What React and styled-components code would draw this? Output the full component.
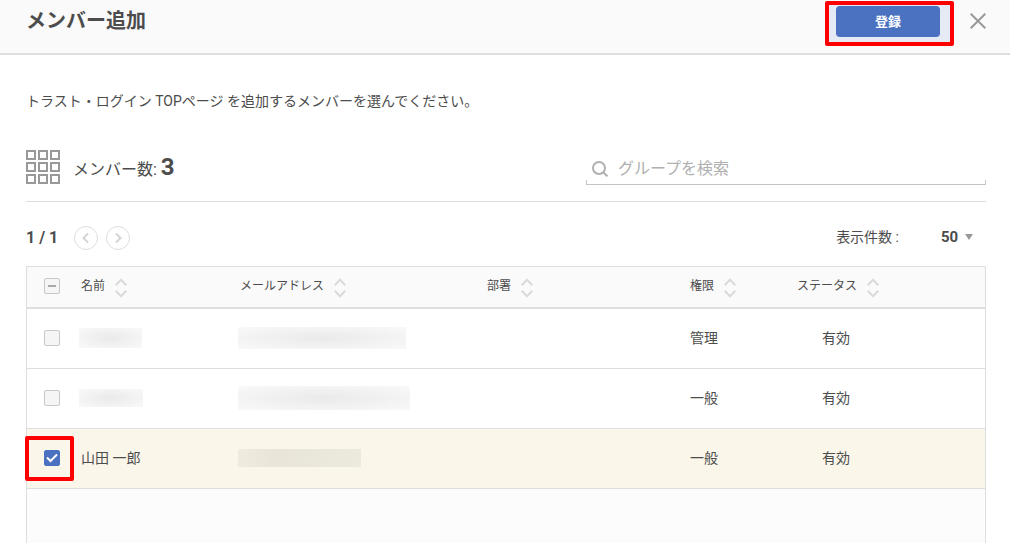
import React, {useEffect, useRef, useState} from 'react'
import styled, {createGlobalStyle, css} from 'styled-components'

const colors = {
  text: '#4c4c4c',
  line: '#dedede',
  muted: '#999',
  primary: '#4a72c1',
  marker: '#f00'
}

const GlobalStyle = createGlobalStyle`
  * {
    box-sizing: border-box;
  }

  body {
    margin: 0;
    background: #fff;
    color: ${colors.text};
    font-family: Roboto, 'Noto Sans CJK JP', sans-serif;
    font-size: 14px;
    line-height: 20px;
  }

  button, input, select {
    font-family: inherit;
    color: inherit;
  }
`

const Page = styled.div`
  display: flex;
  flex-direction: column;
  height: 100vh;
  overflow: hidden;
`

const Header = styled.header`
  display: flex;
  flex: none;
  align-items: flex-start;
  height: 55px;
  padding: 6px 24px 0 26px;
  background: #fafafa;
  border-bottom: 2px solid ${colors.line};
`

const Title = styled.h1`
  flex: 1;
  margin: 0;
  font-size: 20px;
  line-height: 30px;
  font-weight: 700;
`

// red frame drawn around the part the manual talks about
const marked = css`
  position: relative;

  &::before {
    content: '';
    position: absolute;
    inset: ${p => p.$frame};
    border: 4px solid ${colors.marker};
    border-radius: 2px;
    background: ${p => p.$fill || 'transparent'};
    pointer-events: none;
  }
`

const SubmitArea = styled.div`
  ${marked}
  display: flex;
  margin-right: 30px;
`

const SubmitButton = styled.button`
  position: relative;
  width: 104px;
  height: 31px;
  padding: 0;
  border: 0;
  border-radius: 4px;
  background: ${colors.primary};
  color: #fff;
  font-size: 13px;
  font-weight: 700;
  line-height: 31px;
`

const CloseButton = styled.button`
  display: flex;
  height: 30px;
  padding: 0;
  border: 0;
  background: none;
  align-items: center;
`

const Body = styled.main`
  display: flex;
  flex: 1;
  flex-direction: column;
  min-height: 0;
  padding: 36px 24px 0 26px;
`

const Lead = styled.p`
  margin: 0 0 39px;
`

const Summary = styled.div`
  display: flex;
  flex: none;
  align-items: flex-start;
  height: 52px;
  border-bottom: 1px solid ${colors.line};
`

const Count = styled.p`
  flex: 1;
  margin: 0 0 0 13px;
  font-size: 16px;
  line-height: 34px;

  strong {
    font-size: 24px;
    font-weight: 700;
  }
`

const SearchBox = styled.label`
  display: flex;
  align-items: center;
  width: 400px;
  height: 35px;
  padding: 2px 0 0 6px;
  gap: 10px;
  background:
    linear-gradient(#c4c4c4, #c4c4c4) left bottom / 1px 5px no-repeat,
    linear-gradient(#c4c4c4, #c4c4c4) right bottom / 1px 5px no-repeat,
    linear-gradient(#c4c4c4, #c4c4c4) left bottom / 100% 1px no-repeat;
`

const SearchInput = styled.input`
  flex: 1;
  height: 24px;
  padding: 0;
  border: 0;
  outline: 0;
  background: none;
  font-size: 16px;

  &::placeholder {
    color: #b0b0b0;
    opacity: 1;
  }
`

const Pager = styled.div`
  display: flex;
  flex: none;
  align-items: center;
  height: 24px;
  margin: 24px 0 16px;
`

const PageNumber = styled.span`
  width: 48px;
  font-size: 16px;
  font-weight: 700;
`

const PageButton = styled.button`
  display: flex;
  align-items: center;
  justify-content: center;
  width: 24px;
  height: 24px;
  margin-right: 8px;
  padding: 0;
  border: 1px solid ${colors.line};
  border-radius: 50%;
  background: none;
`

const PageSize = styled.label`
  display: flex;
  align-items: center;
  margin-left: auto;
  padding: 0 13px 2px 0;
  gap: 42px;
`

const SelectWrap = styled.span`
  display: flex;
  align-items: center;
  gap: 6px;
`

const Select = styled.select`
  appearance: none;
  width: 18px;
  padding: 0;
  border: 0;
  background: none;
  font-size: 15px;
  font-weight: 700;
`

const TableArea = styled.div`
  flex: 1;
  border: 1px solid ${colors.line};
  border-bottom: 0;
  background: #fcfcfc;
`

const Table = styled.table`
  width: 100%;
  table-layout: fixed;
  border-spacing: 0;
  border-collapse: separate;
`

const Col = styled.col`
  width: ${p => p.$width ? `${p.$width}px` : 'auto'};
`

const HeadCell = styled.th`
  height: 42px;
  padding: 0 0 2px ${p => p.$indent || 0}px;
  border-bottom: 2px solid ${colors.line};
  background: #fafafa;
  font-size: 12px;
  font-weight: 400;
  text-align: left;
`

const SortButton = styled.button`
  display: flex;
  padding: 0;
  gap: 10px;
  border: 0;
  background: none;
  font-size: 12px;
  line-height: 24px;

  svg {
    margin-top: 4px;
  }
`

const Row = styled.tr`
  background: ${p => p.$selected ? '#faf6e9' : '#fff'};
`

const Cell = styled.td`
  height: 60px;
  padding: 0 0 2px ${p => p.$indent || 0}px;
  border-bottom: 1px solid ${colors.line};
`

const Tick = styled.label`
  ${p => p.$frame && marked}
  display: grid;
  width: 16px;
  height: 16px;

  input, svg {
    grid-area: 1 / 1;
  }

  svg {
    position: relative;
    pointer-events: none;
  }
`

const TickInput = styled.input`
  appearance: none;
  width: 16px;
  height: 16px;
  margin: 0;
  border: 1px solid #c8c8c8;
  border-radius: 2px;
  background: #f5f5f5;

  &:checked {
    border-color: ${colors.primary};
    background: ${colors.primary};
  }
`

const Mask = styled.span`
  display: block;
  width: ${p => p.$width}px;
  height: ${p => p.$height}px;
  margin-left: -2px;
  background: ${p => p.$selected
    ? 'linear-gradient(90deg, #efebdf, #e9e6d9 30%, #ece9dd)'
    : 'radial-gradient(#eaeaea, #f9f9f9)'};
`

const GridIcon = () => (
  <svg width="34" height="34" viewBox="0 0 34 34" fill="none" stroke={colors.muted} strokeWidth="2">
    {[1, 13, 25].map(y => [1, 13, 25].map(x => (
      <rect key={`${x}-${y}`} x={x} y={y} width="8" height="8"/>
    )))}
  </svg>
)

const CloseIcon = () => (
  <svg width="16" height="16" viewBox="0 0 16 16" stroke={colors.muted} strokeWidth="2">
    <path d="M.7.7l14.6 14.6M15.3.7L.7 15.3"/>
  </svg>
)

const SearchIcon = () => (
  <svg width="16" height="16" viewBox="0 0 16 16" fill="none" stroke="#b0b0b0" strokeWidth="2">
    <circle cx="7" cy="7" r="6"/>
    <path d="M11 11l4.400 4.400"/>
  </svg>
)

const Chevron = ({d}) => (
  <svg width="12" height="12" viewBox="0 0 12 12" fill="none" stroke="#d4d4d4" strokeWidth="2">
    <path d={d}/>
  </svg>
)

const SortIcon = () => (
  <svg width="12" height="20" viewBox="0 0 12 20" fill="none" stroke="#dadada" strokeWidth="2">
    <path d="M.7 7.200L6 1.800l5.300 5.400M.7 12.800L6 18.200l5.300-5.400"/>
  </svg>
)

const Checkbox = ({label, checked, mixed, frame, onChange}) => {
  const ref = useRef(null)

  useEffect(() => {
    ref.current.indeterminate = Boolean(mixed)
  }, [mixed])

  return (
    <Tick $frame={frame}>
      <TickInput ref={ref} type="checkbox" aria-label={label} checked={checked} onChange={onChange}/>
      <svg width="16" height="16" viewBox="0 0 16 16" fill="none" strokeWidth="2">
        {mixed && <path d="M4 8h8" stroke="#aaa"/>}
        {checked && <path d="M3 7.500l3.500 3.500L13 4.500" stroke="#fff"/>}
      </svg>
    </Tick>
  )
}

const columns = [
  {label: '名前', width: 159},
  {label: 'メールアドレス', width: 247},
  {label: '部署', width: 203},
  {label: '権限', width: 107},
  {label: 'ステータス'}
]

const members = [
  {id: 1, nameMask: [63, 20], mailMask: [168, 22], role: '管理', status: '有効'},
  {id: 2, nameMask: [64, 18], mailMask: [172, 24], role: '一般', status: '有効'},
  {id: 3, name: '山田 一郎', mailMask: [123, 18], role: '一般', status: '有効'}
]

const Hidden = ({size: [width, height], selected}) => (
  <Mask $width={width} $height={height} $selected={selected}/>
)

const App = () => {
  const [selected, setSelected] = useState([3])

  const toggle = id => setSelected(
    selected.includes(id) ? selected.filter(s => s !== id) : [...selected, id]
  )
  const all = selected.length === members.length
  const toggleAll = () => setSelected(all ? [] : members.map(m => m.id))

  return (
    <Page>
      <GlobalStyle/>
      <Header>
        <Title>メンバー追加</Title>
        <SubmitArea $frame="-5px -14px -9px -11px" $fill="#e6eaf4">
          <SubmitButton type="button">登録</SubmitButton>
        </SubmitArea>
        <CloseButton type="button" aria-label="閉じる"><CloseIcon/></CloseButton>
      </Header>
      <Body>
        <Lead>トラスト・ログイン TOPページ を追加するメンバーを選んでください。</Lead>
        <Summary>
          <GridIcon/>
          <Count>メンバー数: <strong>{members.length}</strong></Count>
          <SearchBox>
            <SearchIcon/>
            <SearchInput type="text" aria-label="グループを検索" placeholder="グループを検索"/>
          </SearchBox>
        </Summary>
        <Pager>
          <PageNumber>1 / 1</PageNumber>
          <PageButton type="button" aria-label="前へ"><Chevron d="M8 1.500L3.500 6 8 10.500"/></PageButton>
          <PageButton type="button" aria-label="次へ"><Chevron d="M4 1.500L8.500 6 4 10.500"/></PageButton>
          <PageSize>
            表示件数 :
            <SelectWrap>
              <Select defaultValue="50">
                <option>50</option>
                <option>100</option>
              </Select>
              <svg width="8" height="6" viewBox="0 0 8 6" fill={colors.muted}><path d="M0 0h8L4 6z"/></svg>
            </SelectWrap>
          </PageSize>
        </Pager>
        <TableArea>
          <Table>
            <colgroup>
              <Col $width={54}/>
              {columns.map(c => <Col key={c.label} $width={c.width}/>)}
            </colgroup>
            <thead>
              <tr>
                <HeadCell $indent={17}>
                  <Checkbox label="すべて選択" checked={all} mixed={selected.length > 0 && !all} onChange={toggleAll}/>
                </HeadCell>
                {columns.map(c => (
                  <HeadCell key={c.label}>
                    <SortButton type="button">{c.label}<SortIcon/></SortButton>
                  </HeadCell>
                ))}
              </tr>
            </thead>
            <tbody>
              {members.map(m => {
                const on = selected.includes(m.id)
                return (
                  <Row key={m.id} $selected={on}>
                    <Cell $indent={17}>
                      <Checkbox
                        label={m.name || `メンバー${m.id}`}
                        checked={on}
                        frame={m.id === 3 && '-14px -14px -15px -19px'}
                        onChange={() => toggle(m.id)}
                      />
                    </Cell>
                    <Cell>{m.name || <Hidden size={m.nameMask} selected={on}/>}</Cell>
                    <Cell><Hidden size={m.mailMask} selected={on}/></Cell>
                    <Cell/>
                    <Cell>{m.role}</Cell>
                    <Cell $indent={25}>{m.status}</Cell>
                  </Row>
                )
              })}
            </tbody>
          </Table>
        </TableArea>
      </Body>
    </Page>
  )
}

export default App
